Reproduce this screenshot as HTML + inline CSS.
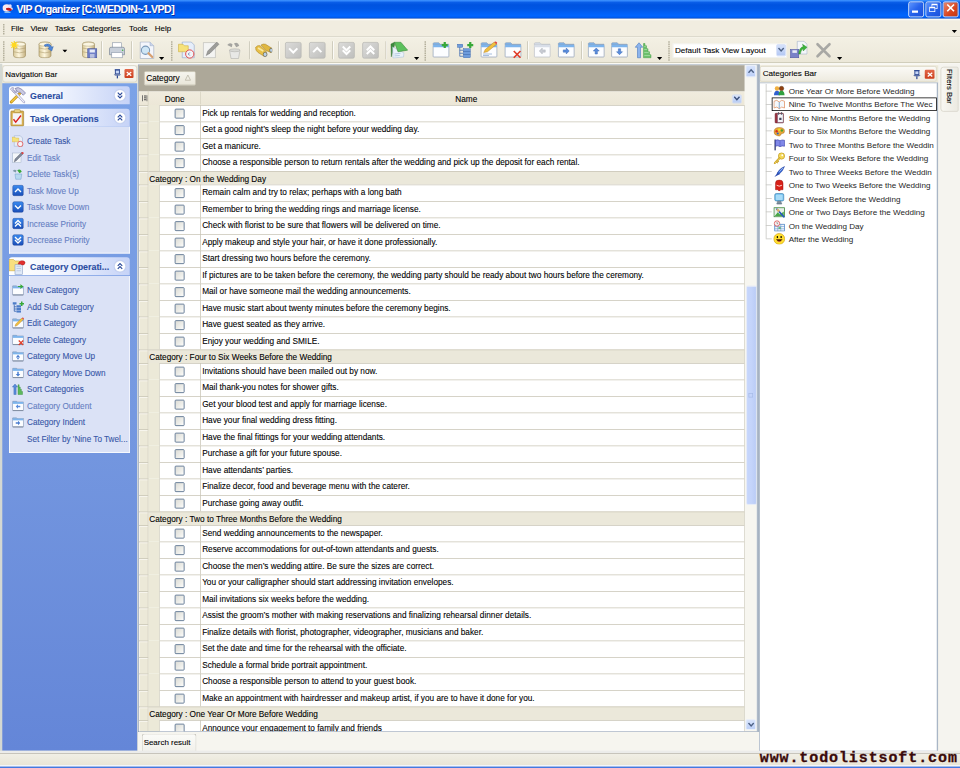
<!DOCTYPE html><html><head><meta charset='utf-8'><style>
html,body{margin:0;padding:0;width:960px;height:768px;overflow:hidden;background:#ECE9D8}
#root{position:absolute;left:0;top:0;width:1280px;height:1024px;transform:scale(0.75);transform-origin:0 0;overflow:hidden;background:#ECE9D8;font-family:"Liberation Sans",sans-serif;font-size:11px;color:#000}
#root div{position:absolute;box-sizing:border-box}
#root .t{white-space:nowrap;line-height:14px;-webkit-text-stroke:0.12px currentColor}
</style></head><body><div id='root'><div style="left:0px;top:0px;width:1280px;height:26px;background:linear-gradient(#4096FF 0%,#2A7EF8 6%,#0A5EE8 12%,#0053E0 25%,#0056E4 45%,#0060F6 65%,#0066FF 82%,#005AEA 90%,#0042BE 96%,#1A50C8 100%)"></div><svg style="position:absolute;left:2px;top:3px" width="17" height="16" viewBox="0 0 17 16"><ellipse cx="7" cy="7.5" rx="5.5" ry="5" fill="#F8E8F0"/><circle cx="11.5" cy="5" r="2.2" fill="#E8E0F8"/><circle cx="13" cy="8.5" r="2" fill="#F0E8F0"/><path d="M6 8 Q10 6.5 13.5 9 Q14.5 11 12 11.5 Q8 11 6 9.5Z" fill="#C0141C"/><path d="M4 13.5 L12 13.5" stroke="#88C0F0" stroke-width="1.5"/></svg><div class="t" style="left:22px;top:3.3px;font-weight:bold;font-size:14px;letter-spacing:-0.6px;line-height:18px;color:#fff;text-shadow:1px 1px 0 #0A2A9C">VIP Organizer [C:\WEDDIN~1.VPD]</div><div style="left:1211px;top:2px;width:21px;height:21px;border:1px solid #fff;border-radius:3px;background:linear-gradient(135deg,#5F97FF,#2663EC 50%,#1C50D9);box-shadow:inset 0 0 1px #1D3CB0"></div><div style="left:1216px;top:14px;width:8px;height:3px;background:#fff"></div><div style="left:1234px;top:2px;width:21px;height:21px;border:1px solid #fff;border-radius:3px;background:linear-gradient(135deg,#5F97FF,#2663EC 50%,#1C50D9);box-shadow:inset 0 0 1px #1D3CB0"></div><div style="left:1242px;top:5px;width:8px;height:7px;border:1px solid #fff;border-top-width:2px"></div><div style="left:1239px;top:9px;width:8px;height:7px;border:1px solid #fff;border-top-width:2px;background:#2B66EA"></div><div style="left:1257px;top:2px;width:21px;height:21px;border:1px solid #fff;border-radius:3px;background:linear-gradient(135deg,#E98B6F,#D9451E 60%,#C23A12);box-shadow:inset 0 0 1px #1D3CB0"></div><svg style="position:absolute;left:1261px;top:4px" width="13" height="13" viewBox="0 0 13 13"><path d="M2 2 L11 11 M11 2 L2 11" stroke="#fff" stroke-width="2.2"/></svg><div style="left:0px;top:25px;width:1280px;height:24px;background:#F1EDE0;border-top:2px solid #FBFBF6;border-bottom:1px solid #CAC6B6"></div><div style="left:4px;top:32px;width:2px;height:2px;background:#B4B09C"></div><div style="left:4px;top:35px;width:2px;height:2px;background:#B4B09C"></div><div style="left:4px;top:38px;width:2px;height:2px;background:#B4B09C"></div><div style="left:4px;top:41px;width:2px;height:2px;background:#B4B09C"></div><div style="left:4px;top:44px;width:2px;height:2px;background:#B4B09C"></div><div class="t" style="left:14.5px;top:29.5px;font-size:10.6px">File</div><div class="t" style="left:40.5px;top:29.5px;font-size:10.6px">View</div><div class="t" style="left:73px;top:29.5px;font-size:10.6px">Tasks</div><div class="t" style="left:109.6px;top:29.5px;font-size:10.6px">Categories</div><div class="t" style="left:172px;top:29.5px;font-size:10.6px">Tools</div><div class="t" style="left:206.4px;top:29.5px;font-size:10.6px">Help</div><svg style="position:absolute;left:1269px;top:40px" width="7" height="4" viewBox="0 0 7 4"><path d="M0 0 L7 0 L3.5 4Z" fill="#000"/></svg><div style="left:0px;top:49px;width:1280px;height:35px;background:linear-gradient(#F3F0E4,#ECE8D9);border-top:1px solid #FBFAF4;border-bottom:1px solid #C9C5B3"></div><div style="left:0px;top:84px;width:1280px;height:2.5px;background:#F9F8F3"></div><div style="left:4px;top:55px;width:2px;height:2px;background:#B4B09C"></div><div style="left:4px;top:58px;width:2px;height:2px;background:#B4B09C"></div><div style="left:4px;top:61px;width:2px;height:2px;background:#B4B09C"></div><div style="left:4px;top:64px;width:2px;height:2px;background:#B4B09C"></div><div style="left:4px;top:67px;width:2px;height:2px;background:#B4B09C"></div><div style="left:4px;top:70px;width:2px;height:2px;background:#B4B09C"></div><div style="left:4px;top:73px;width:2px;height:2px;background:#B4B09C"></div><div style="left:4px;top:76px;width:2px;height:2px;background:#B4B09C"></div><div style="left:4px;top:79px;width:2px;height:2px;background:#B4B09C"></div><svg style="position:absolute;left:13.5px;top:54px" width="24" height="24" viewBox="0 0 24 24"><defs><linearGradient id="dbg" x1="0" x2="1"><stop offset="0" stop-color="#D8C898"/><stop offset=".45" stop-color="#FFF8E0"/><stop offset="1" stop-color="#C4B080"/></linearGradient></defs><path d="M4 5 Q4 2 12 2 Q20 2 20 5 L20 20 Q20 23 12 23 Q4 23 4 20Z" fill="url(#dbg)" stroke="#9C8A5A" stroke-width=".8"/><ellipse cx="12" cy="5" rx="8" ry="2.6" fill="#FBF6E2" stroke="#A8976A" stroke-width=".6"/><path d="M4 10 Q12 13 20 10 M4 15 Q12 18 20 15" fill="none" stroke="#A8976A" stroke-width=".7"/><circle cx="5" cy="6" r="3" fill="#FFE030"/><path d="M5 0.5 L5 11.5 M-0.5 6 L10.5 6 M1.2 2.2 L8.8 9.8 M8.8 2.2 L1.2 9.8" stroke="#FFD820" stroke-width="1.6"/></svg><svg style="position:absolute;left:48px;top:54px" width="24" height="24" viewBox="0 0 24 24"><defs><linearGradient id="dbg" x1="0" x2="1"><stop offset="0" stop-color="#D8C898"/><stop offset=".45" stop-color="#FFF8E0"/><stop offset="1" stop-color="#C4B080"/></linearGradient></defs><path d="M4 5 Q4 2 12 2 Q20 2 20 5 L20 20 Q20 23 12 23 Q4 23 4 20Z" fill="url(#dbg)" stroke="#9C8A5A" stroke-width=".8"/><ellipse cx="12" cy="5" rx="8" ry="2.6" fill="#FBF6E2" stroke="#A8976A" stroke-width=".6"/><path d="M4 10 Q12 13 20 10 M4 15 Q12 18 20 15" fill="none" stroke="#A8976A" stroke-width=".7"/><path d="M11 6 Q18 2 21 9 L23 8 L21 14 L16 11 L18 10 Q16 6 12 8Z" fill="#4E86D8" stroke="#2A5BA8" stroke-width=".6"/></svg><svg style="position:absolute;left:83px;top:66px" width="7" height="4" viewBox="0 0 7 4"><path d="M0 0 L7 0 L3.5 4Z" fill="#000"/></svg><svg style="position:absolute;left:106px;top:54px" width="24" height="24" viewBox="0 0 24 24"><defs><linearGradient id="dbg" x1="0" x2="1"><stop offset="0" stop-color="#D8C898"/><stop offset=".45" stop-color="#FFF8E0"/><stop offset="1" stop-color="#C4B080"/></linearGradient></defs><path d="M4 5 Q4 2 12 2 Q20 2 20 5 L20 20 Q20 23 12 23 Q4 23 4 20Z" fill="url(#dbg)" stroke="#9C8A5A" stroke-width=".8"/><ellipse cx="12" cy="5" rx="8" ry="2.6" fill="#FBF6E2" stroke="#A8976A" stroke-width=".6"/><path d="M4 10 Q12 13 20 10 M4 15 Q12 18 20 15" fill="none" stroke="#A8976A" stroke-width=".7"/><rect x="11" y="11" width="12" height="12" fill="#6F7FC8" stroke="#45549A" stroke-width=".8"/><rect x="13.5" y="12" width="7" height="4" fill="#E8ECF8"/><rect x="14" y="18" width="6" height="5" fill="#B8C0E0"/></svg><div style="left:135px;top:55px;width:1px;height:24px;background:#C5C2B2;box-shadow:1px 0 0 #fff"></div><svg style="position:absolute;left:144px;top:55px" width="24" height="24" viewBox="0 0 24 24"><rect x="6" y="2" width="12" height="8" fill="#fff" stroke="#8A96A8" stroke-width=".8"/><path d="M2 10 Q2 8 4 8 L20 8 Q22 8 22 10 L22 18 L2 18Z" fill="#C9D0DA" stroke="#6E7A8C" stroke-width=".8"/><rect x="5" y="15" width="14" height="7" fill="#fff" stroke="#8A96A8" stroke-width=".8"/><circle cx="19.5" cy="12" r="1" fill="#3CB43C"/></svg><div style="left:175px;top:55px;width:1px;height:24px;background:#C5C2B2;box-shadow:1px 0 0 #fff"></div><svg style="position:absolute;left:184px;top:55px" width="24" height="24" viewBox="0 0 24 24"><path d="M3 1 L16 1 L21 6 L21 23 L3 23Z" fill="#F4F6FC" stroke="#9AA8C0" stroke-width=".8"/><path d="M16 1 L16 6 L21 6" fill="#C8D4EC" stroke="#9AA8C0" stroke-width=".6"/><circle cx="10" cy="12" r="5.5" fill="#CFE6F6" stroke="#7A98B8" stroke-width="1.4"/><path d="M14 16 L19 21" stroke="#D8A070" stroke-width="3" stroke-linecap="round"/></svg><svg style="position:absolute;left:212px;top:76px" width="7" height="4" viewBox="0 0 7 4"><path d="M0 0 L7 0 L3.5 4Z" fill="#000"/></svg><div style="left:228px;top:55px;width:2px;height:2px;background:#B4B09C"></div><div style="left:228px;top:58px;width:2px;height:2px;background:#B4B09C"></div><div style="left:228px;top:61px;width:2px;height:2px;background:#B4B09C"></div><div style="left:228px;top:64px;width:2px;height:2px;background:#B4B09C"></div><div style="left:228px;top:67px;width:2px;height:2px;background:#B4B09C"></div><div style="left:228px;top:70px;width:2px;height:2px;background:#B4B09C"></div><div style="left:228px;top:73px;width:2px;height:2px;background:#B4B09C"></div><div style="left:228px;top:76px;width:2px;height:2px;background:#B4B09C"></div><div style="left:228px;top:79px;width:2px;height:2px;background:#B4B09C"></div><svg style="position:absolute;left:237px;top:55px" width="24" height="24" viewBox="0 0 24 24"><path d="M6 1 L18 1 L22 5 L22 22 L6 22Z" fill="#E6EEFA" stroke="#8EA4C8" stroke-width=".8"/><path d="M1 4 L7 4 L9 6 L14 6 L14 14 L1 14Z" fill="#F6E27A" stroke="#C8A838" stroke-width=".7"/><circle cx="16" cy="17" r="5.5" fill="#F2F4F8" stroke="#E04848" stroke-width="1.3"/><path d="M16 15 L14 17 L16 19" fill="none" stroke="#6080B0" stroke-width="1.2"/></svg><svg style="position:absolute;left:269px;top:55px" width="24" height="24" viewBox="0 0 24 24"><rect x="2" y="2" width="16" height="20" fill="#F4F4F2" stroke="#B8B8B4" stroke-width=".8"/><path d="M6 19 L8 13 L20 1 L23 4 L11 16Z" fill="#9C9C98" stroke="#777" stroke-width=".6"/></svg><svg style="position:absolute;left:301px;top:55px" width="24" height="24" viewBox="0 0 24 24"><path d="M5 12 L19 12 L17 23 L7 23Z" fill="#E8E8E6" stroke="#B0B0AC" stroke-width=".8"/><ellipse cx="12" cy="12" rx="7" ry="2" fill="#D8D8D4" stroke="#A8A8A4" stroke-width=".6"/><path d="M2 5 Q5 1 9 4 L8 8Z M11 3 Q16 0 18 6 L14 8Z" fill="#A4A4A0"/></svg><div style="left:332px;top:55px;width:1px;height:24px;background:#C5C2B2;box-shadow:1px 0 0 #fff"></div><svg style="position:absolute;left:339px;top:55px" width="24" height="24" viewBox="0 0 24 24"><path d="M2 8 Q4 5 8 6 L16 14 Q17 19 13 20 L5 15 Q1 12 2 8Z" fill="#E8C048" stroke="#A88020" stroke-width=".7"/><path d="M9 5 Q12 3 15 4 L23 9 Q25 13 22 15 L15 12Z" fill="#E0B840" stroke="#A88020" stroke-width=".7"/><path d="M5 9 L12 13" stroke="#F8E8A0" stroke-width="2"/><ellipse cx="14.5" cy="17.5" rx="2.5" ry="3" fill="#B8D0E8" stroke="#6A6040" stroke-width=".9"/><ellipse cx="22.5" cy="12" rx="2" ry="2.8" fill="#B8D0E8" stroke="#6A6040" stroke-width=".9"/></svg><div style="left:371px;top:55px;width:1px;height:24px;background:#C5C2B2;box-shadow:1px 0 0 #fff"></div><svg style="position:absolute;left:379px;top:55px" width="24" height="24" viewBox="0 0 24 24"><defs><linearGradient id="gbg" x1="0" y1="0" x2="1" y2="1"><stop offset="0" stop-color="#DCDCDA"/><stop offset="1" stop-color="#BEBEBC"/></linearGradient></defs><rect x="1.5" y="1.5" width="21" height="21" rx="2" fill="url(#gbg)" stroke="#B8B8B4" stroke-width="1"/><path d="M6.5 9.5 L12 15 L17.5 9.5" fill="none" stroke="#fff" stroke-width="2.6"/></svg><svg style="position:absolute;left:411px;top:55px" width="24" height="24" viewBox="0 0 24 24"><defs><linearGradient id="gbg" x1="0" y1="0" x2="1" y2="1"><stop offset="0" stop-color="#DCDCDA"/><stop offset="1" stop-color="#BEBEBC"/></linearGradient></defs><rect x="1.5" y="1.5" width="21" height="21" rx="2" fill="url(#gbg)" stroke="#B8B8B4" stroke-width="1"/><path d="M6.5 14.5 L12 9 L17.5 14.5" fill="none" stroke="#fff" stroke-width="2.6"/></svg><div style="left:443px;top:55px;width:1px;height:24px;background:#C5C2B2;box-shadow:1px 0 0 #fff"></div><svg style="position:absolute;left:450px;top:55px" width="24" height="24" viewBox="0 0 24 24"><defs><linearGradient id="gbg" x1="0" y1="0" x2="1" y2="1"><stop offset="0" stop-color="#DCDCDA"/><stop offset="1" stop-color="#BEBEBC"/></linearGradient></defs><rect x="1.5" y="1.5" width="21" height="21" rx="2" fill="url(#gbg)" stroke="#B8B8B4" stroke-width="1"/><path d="M7 7 L12 12 L17 7 M7 12 L12 17 L17 12" fill="none" stroke="#fff" stroke-width="2.6"/></svg><svg style="position:absolute;left:482px;top:55px" width="24" height="24" viewBox="0 0 24 24"><defs><linearGradient id="gbg" x1="0" y1="0" x2="1" y2="1"><stop offset="0" stop-color="#DCDCDA"/><stop offset="1" stop-color="#BEBEBC"/></linearGradient></defs><rect x="1.5" y="1.5" width="21" height="21" rx="2" fill="url(#gbg)" stroke="#B8B8B4" stroke-width="1"/><path d="M7 12 L12 7 L17 12 M7 17 L12 12 L17 17" fill="none" stroke="#fff" stroke-width="2.6"/></svg><div style="left:514px;top:55px;width:1px;height:24px;background:#C5C2B2;box-shadow:1px 0 0 #fff"></div><svg style="position:absolute;left:520px;top:55px" width="24" height="24" viewBox="0 0 24 24"><path d="M1.3 3.7 L6 1.3 L6 5 L1.8 20.7Z" fill="#3C8A3C" stroke="#2E6E2E" stroke-width=".6"/><path d="M3.5 7.5 L18.5 15.5 L18 21 L4 22.3Z" fill="#EAF2FA" stroke="#A8C0D8" stroke-width=".7"/><path d="M6 17 L14 16 M6 19.5 L13 19" stroke="#90B0D0" stroke-width=".8"/><path d="M5.9 1.3 L14.4 1.3 L23.5 11.9 L10.7 14Z" fill="#5CC05C" stroke="#3A8A3A" stroke-width=".8"/></svg><svg style="position:absolute;left:552px;top:76px" width="7" height="4" viewBox="0 0 7 4"><path d="M0 0 L7 0 L3.5 4Z" fill="#000"/></svg><div style="left:566px;top:55px;width:2px;height:2px;background:#B4B09C"></div><div style="left:566px;top:58px;width:2px;height:2px;background:#B4B09C"></div><div style="left:566px;top:61px;width:2px;height:2px;background:#B4B09C"></div><div style="left:566px;top:64px;width:2px;height:2px;background:#B4B09C"></div><div style="left:566px;top:67px;width:2px;height:2px;background:#B4B09C"></div><div style="left:566px;top:70px;width:2px;height:2px;background:#B4B09C"></div><div style="left:566px;top:73px;width:2px;height:2px;background:#B4B09C"></div><div style="left:566px;top:76px;width:2px;height:2px;background:#B4B09C"></div><div style="left:566px;top:79px;width:2px;height:2px;background:#B4B09C"></div><svg style="position:absolute;left:576px;top:55px" width="24" height="24" viewBox="0 0 24 24"><path d="M1.5 5 L1.5 3 Q1.5 2 3 2 L9 2 L11 4 L22 4 Q22.5 4 22.5 5" fill="#7DB4EC" stroke="#8C9CB4" stroke-width=".8"/><rect x="1.5" y="5" width="21" height="16" rx="1" fill="#FCFDFF" stroke="#8C9CB4" stroke-width=".9"/><rect x="1.5" y="5" width="21" height="3" fill="#7DB4EC"/><path d="M17 1 L17 9 M13 5 L21 5" stroke="#38A838" stroke-width="3"/></svg><svg style="position:absolute;left:608px;top:55px" width="24" height="24" viewBox="0 0 24 24"><rect x="2" y="4" width="7" height="4" fill="#6E9CDC" stroke="#3A68B0" stroke-width=".6"/><path d="M5 8 L5 20 L10 20 M5 12 L10 12 M5 16 L10 16" stroke="#3A68B0" fill="none"/><rect x="10" y="10" width="9" height="4" fill="#6E9CDC" stroke="#3A68B0" stroke-width=".6"/><rect x="10" y="14" width="9" height="4" fill="#6E9CDC" stroke="#3A68B0" stroke-width=".6"/><rect x="10" y="18" width="9" height="4" fill="#6E9CDC" stroke="#3A68B0" stroke-width=".6"/><path d="M19 1 L19 9 M15 5 L23 5" stroke="#38A838" stroke-width="3"/></svg><svg style="position:absolute;left:640px;top:55px" width="24" height="24" viewBox="0 0 24 24"><path d="M1.5 5 L1.5 3 Q1.5 2 3 2 L9 2 L11 4 L22 4 Q22.5 4 22.5 5" fill="#7DB4EC" stroke="#8C9CB4" stroke-width=".8"/><rect x="1.5" y="5" width="21" height="16" rx="1" fill="#FCFDFF" stroke="#8C9CB4" stroke-width=".9"/><rect x="1.5" y="5" width="21" height="3" fill="#7DB4EC"/><path d="M5 15 L7 11 L19 1 L22 4 L10 14Z" fill="#F0C040" stroke="#B07820" stroke-width=".6"/><path d="M19 1 L22 4 L23 2 L21 0Z" fill="#E04040"/><path d="M4 17 L16 17 M4 19 L12 19" stroke="#8CA8D0"/></svg><svg style="position:absolute;left:672px;top:55px" width="24" height="24" viewBox="0 0 24 24"><path d="M1.5 5 L1.5 3 Q1.5 2 3 2 L9 2 L11 4 L22 4 Q22.5 4 22.5 5" fill="#7DB4EC" stroke="#8C9CB4" stroke-width=".8"/><rect x="1.5" y="5" width="21" height="16" rx="1" fill="#FCFDFF" stroke="#8C9CB4" stroke-width=".9"/><rect x="1.5" y="5" width="21" height="3" fill="#7DB4EC"/><path d="M13 13 L22 22 M22 13 L13 22" stroke="#E03C28" stroke-width="2.2"/></svg><div style="left:703px;top:55px;width:1px;height:24px;background:#C5C2B2;box-shadow:1px 0 0 #fff"></div><svg style="position:absolute;left:711px;top:55px" width="24" height="24" viewBox="0 0 24 24"><path d="M1.5 5 L1.5 3 Q1.5 2 3 2 L9 2 L11 4 L22 4 Q22.5 4 22.5 5" fill="#D8DEE8" stroke="#B8BCC4" stroke-width=".8"/><rect x="1.5" y="5" width="21" height="16" rx="1" fill="#FCFDFF" stroke="#B8BCC4" stroke-width=".9"/><rect x="1.5" y="5" width="21" height="3" fill="#D8DEE8"/><path d="M8 13 L12 9 L12 11.5 L16 11.5 L16 14.5 L12 14.5 L12 17Z" fill="#C8CCD4" stroke="#A8ACB4" stroke-width=".6"/></svg><svg style="position:absolute;left:743px;top:55px" width="24" height="24" viewBox="0 0 24 24"><path d="M1.5 5 L1.5 3 Q1.5 2 3 2 L9 2 L11 4 L22 4 Q22.5 4 22.5 5" fill="#7DB4EC" stroke="#8C9CB4" stroke-width=".8"/><rect x="1.5" y="5" width="21" height="16" rx="1" fill="#FCFDFF" stroke="#8C9CB4" stroke-width=".9"/><rect x="1.5" y="5" width="21" height="3" fill="#7DB4EC"/><path d="M16 13 L12 9 L12 11.5 L8 11.5 L8 14.5 L12 14.5 L12 17Z" fill="#5A8CDC" stroke="#3060B0" stroke-width=".6"/></svg><div style="left:775px;top:55px;width:1px;height:24px;background:#C5C2B2;box-shadow:1px 0 0 #fff"></div><svg style="position:absolute;left:783px;top:55px" width="24" height="24" viewBox="0 0 24 24"><path d="M1.5 5 L1.5 3 Q1.5 2 3 2 L9 2 L11 4 L22 4 Q22.5 4 22.5 5" fill="#7DB4EC" stroke="#8C9CB4" stroke-width=".8"/><rect x="1.5" y="5" width="21" height="16" rx="1" fill="#FCFDFF" stroke="#8C9CB4" stroke-width=".9"/><rect x="1.5" y="5" width="21" height="3" fill="#7DB4EC"/><path d="M12 9 L8 13 L10.5 13 L10.5 17 L13.5 17 L13.5 13 L16 13Z" fill="#5A8CDC" stroke="#3060B0" stroke-width=".6"/></svg><svg style="position:absolute;left:814px;top:55px" width="24" height="24" viewBox="0 0 24 24"><path d="M1.5 5 L1.5 3 Q1.5 2 3 2 L9 2 L11 4 L22 4 Q22.5 4 22.5 5" fill="#7DB4EC" stroke="#8C9CB4" stroke-width=".8"/><rect x="1.5" y="5" width="21" height="16" rx="1" fill="#FCFDFF" stroke="#8C9CB4" stroke-width=".9"/><rect x="1.5" y="5" width="21" height="3" fill="#7DB4EC"/><path d="M12 18 L8 14 L10.5 14 L10.5 10 L13.5 10 L13.5 14 L16 14Z" fill="#5A8CDC" stroke="#3060B0" stroke-width=".6"/></svg><svg style="position:absolute;left:846px;top:55px" width="24" height="24" viewBox="0 0 24 24"><path d="M6 2 L1 8 L4 8 L4 22 L8 22 L8 8 L11 8Z" fill="#8CB4EC" stroke="#4A78C0" stroke-width=".8"/><path d="M12 3 L14 3 L14 6 L16 6 L16 10 L18 10 L18 14 L20 14 L20 18 L22 18 L22 22 L12 22Z" fill="#6CC06C" stroke="#3A9A3A" stroke-width=".6"/><path d="M13 7 L15 7 M13 11 L17 11 M13 15 L19 15 M13 19 L21 19" stroke="#B8E8B8" stroke-width=".8"/></svg><svg style="position:absolute;left:876px;top:76px" width="7" height="4" viewBox="0 0 7 4"><path d="M0 0 L7 0 L3.5 4Z" fill="#000"/></svg><div style="left:891px;top:55px;width:2px;height:2px;background:#B4B09C"></div><div style="left:891px;top:58px;width:2px;height:2px;background:#B4B09C"></div><div style="left:891px;top:61px;width:2px;height:2px;background:#B4B09C"></div><div style="left:891px;top:64px;width:2px;height:2px;background:#B4B09C"></div><div style="left:891px;top:67px;width:2px;height:2px;background:#B4B09C"></div><div style="left:891px;top:70px;width:2px;height:2px;background:#B4B09C"></div><div style="left:891px;top:73px;width:2px;height:2px;background:#B4B09C"></div><div style="left:891px;top:76px;width:2px;height:2px;background:#B4B09C"></div><div style="left:891px;top:79px;width:2px;height:2px;background:#B4B09C"></div><div style="left:897px;top:58px;width:152px;height:19px;background:#fff;border:1px solid #F0EFEA"></div><div class="t" style="left:900px;top:60px;font-size:10.8px">Default Task View Layout</div><div style="left:1035px;top:59px;width:13px;height:16px;background:linear-gradient(#D6E2FB,#B4C8F4);border-radius:2px;border:1px solid #C8D6F6"></div><svg style="position:absolute;left:1037px;top:63px" width="9" height="7" viewBox="0 0 9 7"><path d="M1 1 L4.5 5 L8 1" fill="none" stroke="#4D6185" stroke-width="1.8"/></svg><svg style="position:absolute;left:1053px;top:54px" width="24" height="24" viewBox="0 0 24 24"><path d="M10 1 L19 1 L23 5 L23 18 L10 18Z" fill="#F4F6FA" stroke="#98A8C0" stroke-width=".7"/><rect x="1" y="12" width="11" height="11" fill="#7A82C8" stroke="#4A52A0" stroke-width=".7"/><rect x="3.5" y="13" width="6" height="3.5" fill="#E8ECF8"/><path d="M12 18 Q12 10 18 8 L17 5 L23 9 L18 14 L18 11 Q15 12 14 18Z" fill="#3CB43C" stroke="#2A8A2A" stroke-width=".6"/></svg><svg style="position:absolute;left:1086px;top:55px" width="24" height="24" viewBox="0 0 24 24"><path d="M4 4 L20 20 M20 4 L4 20" stroke="#A8A8A4" stroke-width="3.5" stroke-linecap="round"/></svg><svg style="position:absolute;left:1116px;top:76px" width="7" height="4" viewBox="0 0 7 4"><path d="M0 0 L7 0 L3.5 4Z" fill="#000"/></svg><div style="left:3px;top:86.5px;width:180px;height:23px;background:linear-gradient(#FAF9F5,#F0EEE6);border:1px solid #D6D3C6;border-radius:4px"></div><div class="t" style="left:7px;top:90.5px;font-size:10.6px">Navigation Bar</div><svg style="position:absolute;left:151px;top:92px" width="11" height="13" viewBox="0 0 11 13"><path d="M2 1 L9 1" stroke="#2A4690" stroke-width="1.6"/><rect x="2.8" y="1.5" width="5.4" height="5" fill="#C8D8F8" stroke="#2A4690" stroke-width="1.2"/><path d="M0.5 7.2 L10.5 7.2 L8.5 8.8 L2.5 8.8Z" fill="#2A4690"/><path d="M5.5 8.5 L5.5 12.5" stroke="#2A4690" stroke-width="1.6"/></svg><div style="left:165.7px;top:92px;width:12.5px;height:12px;background:linear-gradient(#E2684A,#CC3E1C);border-radius:1.5px"></div><svg style="position:absolute;left:168.2px;top:94.5px" width="8" height="7" viewBox="0 0 8 7"><path d="M1 1 L7 6 M7 1 L1 6" stroke="#fff" stroke-width="1.7"/></svg><div style="left:0px;top:85px;width:2.5px;height:918px;background:#D4D8D2"></div><div style="left:3px;top:111px;width:180px;height:890px;background:linear-gradient(#7BA2E7,#7598E0 50%,#6486D8 100%)"></div><div style="left:12px;top:115px;width:161px;height:24px;background:linear-gradient(90deg,#fff 0%,#F4F7FE 35%,#C6D3F7 100%);border-radius:4px 4px 0 0"></div><svg style="position:absolute;left:12px;top:115px" width="24" height="24" viewBox="0 0 24 24"><path d="M3 21 L14 10" stroke="#C89820" stroke-width="4" stroke-linecap="round"/><path d="M3 21 L14 10" stroke="#F0C840" stroke-width="2"/><path d="M8 3 Q12 0 17 4 L22 9 L19 12 L15 8 L12 8Z" fill="#C8C8E0" stroke="#6A6A9A" stroke-width=".8"/><path d="M6 6 L20 21" stroke="#9898C0" stroke-width="3.2" stroke-linecap="round"/><path d="M6 6 L20 21" stroke="#F0F0FA" stroke-width="1.6" stroke-linecap="round"/><path d="M2 4 Q3 1 6 2 L5 5 L7 7 L10 6 Q10 9 7 9Z" fill="#E8E8F8" stroke="#6A6A9A" stroke-width=".7"/></svg><div class="t" style="left:40px;top:121px;font-weight:bold;font-size:11.8px;color:#2A4DA2;line-height:14px">General</div><div style="left:152px;top:119px;width:16px;height:16px;background:#fff;border-radius:50%;border:1px solid #C8D4F0;box-shadow:0 0 1px #A8B8E0"></div><svg style="position:absolute;left:152px;top:119px" width="16" height="16" viewBox="0 0 16 16"><path d="M5 4.5 L8 7.5 L11 4.5 M5 8.5 L8 11.5 L11 8.5" fill="none" stroke="#28489A" stroke-width="1.5"/></svg><div style="left:12px;top:145px;width:161px;height:24px;background:linear-gradient(90deg,#fff 0%,#F4F7FE 35%,#C6D3F7 100%);border-radius:4px 4px 0 0"></div><svg style="position:absolute;left:12px;top:145px" width="24" height="24" viewBox="0 0 24 24"><rect x="2.5" y="3" width="17" height="20" rx="1" fill="#D8B050" stroke="#9A7A30" stroke-width=".8"/><rect x="5" y="6" width="12" height="15" fill="#F4F4F8"/><rect x="7" y="1" width="8" height="4" rx="1" fill="#E8D080" stroke="#9A7A30" stroke-width=".6"/><path d="M6 14 L9 18 L16 9" fill="none" stroke="#D82020" stroke-width="1.8"/></svg><div class="t" style="left:40px;top:151px;font-weight:bold;font-size:11.8px;color:#2A4DA2;line-height:14px">Task Operations</div><div style="left:152px;top:149px;width:16px;height:16px;background:#fff;border-radius:50%;border:1px solid #C8D4F0;box-shadow:0 0 1px #A8B8E0"></div><svg style="position:absolute;left:152px;top:149px" width="16" height="16" viewBox="0 0 16 16"><path d="M5 7.5 L8 4.5 L11 7.5 M5 11.5 L8 8.5 L11 11.5" fill="none" stroke="#28489A" stroke-width="1.5"/></svg><div style="left:12px;top:169px;width:161px;height:169px;background:#DBE2F6;border:1px solid #fff;border-top:none"></div><svg style="position:absolute;left:16px;top:180px" width="16" height="16" viewBox="0 0 16 16"><path d="M3 1 L11 1 L14 4 L14 15 L3 15Z" fill="#E8EEF8" stroke="#8EA4C8" stroke-width=".6"/><path d="M0 3 L4 3 L5 4 L9 4 L9 9 L0 9Z" fill="#F6E27A" stroke="#C8A838" stroke-width=".5"/><circle cx="11" cy="12" r="3.6" fill="#F4F4F8" stroke="#E04848" stroke-width="1"/></svg><div class="t" style="left:36px;top:181px;font-size:10.9px;color:#3756A6">Create Task</div><svg style="position:absolute;left:16px;top:202px" width="16" height="16" viewBox="0 0 16 16"><rect x="1" y="2" width="11" height="13" fill="#F4F6FA" stroke="#98A8C0" stroke-width=".6"/><path d="M3 14 L4 10 L13 1 L15 3 L6 12Z" fill="#808898" stroke="#505868" stroke-width=".5"/><circle cx="14" cy="2" r="1.5" fill="#E04040"/></svg><div class="t" style="left:36px;top:203px;font-size:10.9px;color:#6580C2">Edit Task</div><svg style="position:absolute;left:16px;top:224px" width="16" height="16" viewBox="0 0 16 16"><path d="M4 8 L13 8 L12 15 L5 15Z" fill="#B8D8F0" stroke="#6898C8" stroke-width=".6"/><path d="M1 4 Q3 1 6 3 L5 6Z" fill="#8098A8"/><path d="M7 3 Q11 0 13 5 L10 7Z" fill="#38A838"/></svg><div class="t" style="left:36px;top:225px;font-size:10.9px;color:#6580C2">Delete Task(s)</div><svg style="position:absolute;left:16px;top:246px" width="16" height="16" viewBox="0 0 16 16"><defs><linearGradient id="bsq" x1="0" y1="0" x2="0" y2="1"><stop offset="0" stop-color="#3A8AF0"/><stop offset="1" stop-color="#1A4EB8"/></linearGradient></defs><rect x="1" y="1" width="14" height="14" rx="2" fill="url(#bsq)" stroke="#1A3E90" stroke-width=".6"/><path d="M4 10 L8 6 L12 10" fill="none" stroke="#fff" stroke-width="1.8"/></svg><div class="t" style="left:36px;top:247px;font-size:10.9px;color:#6580C2">Task Move Up</div><svg style="position:absolute;left:16px;top:268px" width="16" height="16" viewBox="0 0 16 16"><defs><linearGradient id="bsq" x1="0" y1="0" x2="0" y2="1"><stop offset="0" stop-color="#3A8AF0"/><stop offset="1" stop-color="#1A4EB8"/></linearGradient></defs><rect x="1" y="1" width="14" height="14" rx="2" fill="url(#bsq)" stroke="#1A3E90" stroke-width=".6"/><path d="M4 6 L8 10 L12 6" fill="none" stroke="#fff" stroke-width="1.8"/></svg><div class="t" style="left:36px;top:269px;font-size:10.9px;color:#6580C2">Task Move Down</div><svg style="position:absolute;left:16px;top:290px" width="16" height="16" viewBox="0 0 16 16"><defs><linearGradient id="bsq" x1="0" y1="0" x2="0" y2="1"><stop offset="0" stop-color="#3A8AF0"/><stop offset="1" stop-color="#1A4EB8"/></linearGradient></defs><rect x="1" y="1" width="14" height="14" rx="2" fill="url(#bsq)" stroke="#1A3E90" stroke-width=".6"/><path d="M4 8 L8 4 L12 8 M4 12 L8 8 L12 12" fill="none" stroke="#fff" stroke-width="1.8"/></svg><div class="t" style="left:36px;top:291px;font-size:10.9px;color:#6580C2">Increase Priority</div><svg style="position:absolute;left:16px;top:312px" width="16" height="16" viewBox="0 0 16 16"><defs><linearGradient id="bsq" x1="0" y1="0" x2="0" y2="1"><stop offset="0" stop-color="#3A8AF0"/><stop offset="1" stop-color="#1A4EB8"/></linearGradient></defs><rect x="1" y="1" width="14" height="14" rx="2" fill="url(#bsq)" stroke="#1A3E90" stroke-width=".6"/><path d="M4 4 L8 8 L12 4 M4 8 L8 12 L12 8" fill="none" stroke="#fff" stroke-width="1.8"/></svg><div class="t" style="left:36px;top:313px;font-size:10.9px;color:#6580C2">Decrease Priority</div><div style="left:12px;top:343px;width:161px;height:24px;background:linear-gradient(90deg,#fff 0%,#F4F7FE 35%,#C6D3F7 100%);border-radius:4px 4px 0 0"></div><svg style="position:absolute;left:12px;top:343px" width="24" height="24" viewBox="0 0 24 24"><path d="M0 3 L6 3 L8 5 L14 5 L14 18 L0 18Z" fill="#F8E080" stroke="#C8A030" stroke-width=".7"/><rect x="8" y="10" width="10" height="13" fill="#E0EAF8" stroke="#8098C0" stroke-width=".7"/><path d="M10 12 L16 12 M10 15 L16 15 M10 18 L16 18" stroke="#A0B0D0" stroke-width=".7"/><path d="M12 9 Q14 3 20 5 Q23 7 20 10 Q17 11 15 9Z" fill="#E03030" stroke="#A01818" stroke-width=".5"/></svg><div class="t" style="left:40px;top:349px;font-weight:bold;font-size:11.8px;color:#2A4DA2;line-height:14px">Category Operati...</div><div style="left:152px;top:347px;width:16px;height:16px;background:#fff;border-radius:50%;border:1px solid #C8D4F0;box-shadow:0 0 1px #A8B8E0"></div><svg style="position:absolute;left:152px;top:347px" width="16" height="16" viewBox="0 0 16 16"><path d="M5 7.5 L8 4.5 L11 7.5 M5 11.5 L8 8.5 L11 11.5" fill="none" stroke="#28489A" stroke-width="1.5"/></svg><div style="left:12px;top:368px;width:161px;height:236px;background:#DBE2F6;border:1px solid #fff;border-top:none"></div><svg style="position:absolute;left:16px;top:379.3px" width="16" height="16" viewBox="0 0 16 16"><rect x="1" y="3" width="14" height="11" fill="#FCFDFF" stroke="#7C8CA8" stroke-width=".7"/><rect x="1" y="3" width="14" height="2.5" fill="#7DB4EC"/><path d="M1 3 L1 2 L6 2 L7 3" fill="#7DB4EC" stroke="#7C8CA8" stroke-width=".5"/><path d="M1 14.5 L15 14.5" stroke="#707C90" stroke-width="1"/><path d="M8 3 L13 3 M11 0.5 L14 3 L11 5.5" stroke="#38A838" stroke-width="1.6" fill="none"/></svg><div class="t" style="left:36px;top:380.3px;font-size:10.9px;color:#3756A6">New Category</div><svg style="position:absolute;left:16px;top:401.3px" width="16" height="16" viewBox="0 0 16 16"><rect x="1" y="2" width="5" height="3" fill="#4C7CC8"/><path d="M3 5 L3 14 L6 14 M3 8 L6 8 M3 11 L6 11" stroke="#2A5AA8" fill="none"/><rect x="6" y="6" width="6" height="3" fill="#4C7CC8"/><rect x="6" y="9.5" width="6" height="3" fill="#4C7CC8"/><rect x="6" y="13" width="6" height="3" fill="#4C7CC8"/><path d="M13 1 L13 7 M10 4 L16 4" stroke="#38A838" stroke-width="2"/></svg><div class="t" style="left:36px;top:402.3px;font-size:10.9px;color:#3756A6">Add Sub Category</div><svg style="position:absolute;left:16px;top:423.3px" width="16" height="16" viewBox="0 0 16 16"><rect x="1" y="3" width="14" height="11" fill="#FCFDFF" stroke="#7C8CA8" stroke-width=".7"/><rect x="1" y="3" width="14" height="2.5" fill="#7DB4EC"/><path d="M1 3 L1 2 L6 2 L7 3" fill="#7DB4EC" stroke="#7C8CA8" stroke-width=".5"/><path d="M1 14.5 L15 14.5" stroke="#707C90" stroke-width="1"/><path d="M4 12 L5 9 L13 1 L15 3 L7 11Z" fill="#F0C040" stroke="#B07820" stroke-width=".5"/><path d="M13 1 L15 3 L16 1.5 L14.5 0Z" fill="#E04040"/></svg><div class="t" style="left:36px;top:424.3px;font-size:10.9px;color:#3756A6">Edit Category</div><svg style="position:absolute;left:16px;top:445.3px" width="16" height="16" viewBox="0 0 16 16"><rect x="1" y="3" width="14" height="11" fill="#FCFDFF" stroke="#7C8CA8" stroke-width=".7"/><rect x="1" y="3" width="14" height="2.5" fill="#7DB4EC"/><path d="M1 3 L1 2 L6 2 L7 3" fill="#7DB4EC" stroke="#7C8CA8" stroke-width=".5"/><path d="M1 14.5 L15 14.5" stroke="#707C90" stroke-width="1"/><path d="M9 9 L15 15 M15 9 L9 15" stroke="#E03C28" stroke-width="1.6"/></svg><div class="t" style="left:36px;top:446.3px;font-size:10.9px;color:#3756A6">Delete Category</div><svg style="position:absolute;left:16px;top:467.3px" width="16" height="16" viewBox="0 0 16 16"><rect x="1" y="3" width="14" height="11" fill="#FCFDFF" stroke="#7C8CA8" stroke-width=".7"/><rect x="1" y="3" width="14" height="2.5" fill="#7DB4EC"/><path d="M1 3 L1 2 L6 2 L7 3" fill="#7DB4EC" stroke="#7C8CA8" stroke-width=".5"/><path d="M1 14.5 L15 14.5" stroke="#707C90" stroke-width="1"/><path d="M8 6 L5 9.5 L11 9.5Z M7 9 L9 9 L9 12 L7 12Z" fill="#4A7CD0"/></svg><div class="t" style="left:36px;top:468.3px;font-size:10.9px;color:#3756A6">Category Move Up</div><svg style="position:absolute;left:16px;top:489.3px" width="16" height="16" viewBox="0 0 16 16"><rect x="1" y="3" width="14" height="11" fill="#FCFDFF" stroke="#7C8CA8" stroke-width=".7"/><rect x="1" y="3" width="14" height="2.5" fill="#7DB4EC"/><path d="M1 3 L1 2 L6 2 L7 3" fill="#7DB4EC" stroke="#7C8CA8" stroke-width=".5"/><path d="M1 14.5 L15 14.5" stroke="#707C90" stroke-width="1"/><path d="M8 13 L5 9.5 L11 9.5Z M7 6.5 L9 6.5 L9 10 L7 10Z" fill="#4A7CD0"/></svg><div class="t" style="left:36px;top:490.3px;font-size:10.9px;color:#3756A6">Category Move Down</div><svg style="position:absolute;left:16px;top:511.29999999999995px" width="16" height="16" viewBox="0 0 16 16"><path d="M4 1 L0.5 5 L2.5 5 L2.5 15 L5.5 15 L5.5 5 L7.5 5Z" fill="#5A8CDC" stroke="#2A5AA8" stroke-width=".5"/><path d="M8 2 L9.5 2 L9.5 5 L11 5 L11 8 L12.5 8 L12.5 11 L14 11 L14 15 L8 15Z" fill="#5CB85C" stroke="#2A8A2A" stroke-width=".5"/></svg><div class="t" style="left:36px;top:512.3px;font-size:10.9px;color:#3756A6">Sort Categories</div><svg style="position:absolute;left:16px;top:533.3px" width="16" height="16" viewBox="0 0 16 16"><rect x="1" y="3" width="14" height="11" fill="#FCFDFF" stroke="#7C8CA8" stroke-width=".7"/><rect x="1" y="3" width="14" height="2.5" fill="#7DB4EC"/><path d="M1 3 L1 2 L6 2 L7 3" fill="#7DB4EC" stroke="#7C8CA8" stroke-width=".5"/><path d="M1 14.5 L15 14.5" stroke="#707C90" stroke-width="1"/><path d="M5 9 L8 6 L8 12Z M8 8 L11 8 L11 10 L8 10Z" fill="#5A8CDC"/></svg><div class="t" style="left:36px;top:534.3px;font-size:10.9px;color:#6580C2">Category Outdent</div><svg style="position:absolute;left:16px;top:555.3px" width="16" height="16" viewBox="0 0 16 16"><rect x="1" y="3" width="14" height="11" fill="#FCFDFF" stroke="#7C8CA8" stroke-width=".7"/><rect x="1" y="3" width="14" height="2.5" fill="#7DB4EC"/><path d="M1 3 L1 2 L6 2 L7 3" fill="#7DB4EC" stroke="#7C8CA8" stroke-width=".5"/><path d="M1 14.5 L15 14.5" stroke="#707C90" stroke-width="1"/><path d="M11 9 L8 6 L8 12Z M5 8 L8 8 L8 10 L5 10Z" fill="#4A7CD0"/></svg><div class="t" style="left:36px;top:556.3px;font-size:10.9px;color:#3756A6">Category Indent</div><div class="t" style="left:36px;top:578.3px;font-size:10.9px;color:#3756A6">Set Filter by &#x27;Nine To Twel...</div><div style="left:184px;top:86px;width:829px;height:890px;background:#fff;border:1px solid #8E9DB2"></div><div style="left:185px;top:87px;width:808px;height:34.5px;background:#ADA899"></div><div style="left:192px;top:95px;width:69px;height:19px;background:linear-gradient(#F6F5EF,#E9E6D9);border:1px solid #D8D4C4;border-radius:2px"></div><div class="t" style="left:195px;top:96.5px;font-size:11px;color:#000">Category</div><svg style="position:absolute;left:246px;top:99px" width="9" height="9" viewBox="0 0 9 9"><path d="M4.5 1 L8 8 L1 8Z" fill="none" stroke="#B8B4A4" stroke-width="1"/></svg><div style="left:185px;top:121.5px;width:808px;height:18.5px;background:linear-gradient(#F0ECDE,#ECE7D7)"></div><div style="left:197px;top:121px;width:1px;height:19px;background:#D6D2C0"></div><div style="left:266.5px;top:122px;width:1px;height:17px;background:#D6D2C0"></div><svg style="position:absolute;left:189px;top:126px" width="8" height="10" viewBox="0 0 8 10"><path d="M1 1 L1 9 M7 1 L7 9" stroke="#666" stroke-width="1.2"/><path d="M3 2 L6 2 M3 4.5 L6 4.5 M3 7 L6 7" stroke="#444" stroke-width="1.3"/></svg><div class="t" style="left:219.7px;top:125px;font-size:11px">Done</div><div class="t" style="left:607px;top:125px;font-size:11px">Name</div><div style="left:976px;top:126px;width:13px;height:12px;background:linear-gradient(#D6E2FB,#B8CCF4);border-radius:2px;border:1px solid #CFDBF7"></div><svg style="position:absolute;left:978px;top:128px" width="9" height="7" viewBox="0 0 9 7"><path d="M1 1 L4.5 5 L8 1" fill="none" stroke="#3A4E78" stroke-width="1.8"/></svg><div style="left:185px;top:140px;width:808px;height:835px;overflow:hidden"><div style="left:0px;top:0px;width:13px;height:22px;background:#ECE9D8;border-right:1px solid #C9C5B6;border-top:1px solid #C9C5B6;box-shadow:inset 1.3px 1.3px 0 #FAF9F4"></div><div style="left:13px;top:0px;width:15px;height:22px;background:#ECE9D8;border-right:1px solid #C9C5B6"></div><div style="left:28px;top:0px;width:54.5px;height:22px;background:#fff;border-right:1px solid #C9C5B6;border-top:1px solid #C9C5B6"></div><div style="left:47.8px;top:5px;width:13px;height:13px;border:1.4px solid #3A5678;background:linear-gradient(135deg,#DCDCD6,#F2F2EE 70%,#fff);border-radius:1.5px"></div><div style="left:82.5px;top:0px;width:725.5px;height:22px;background:#fff;border-top:1px solid #C9C5B6"></div><div class="t" style="left:84.5px;top:3.3px;font-size:11px">Pick up rentals for wedding and reception.</div><div style="left:0px;top:22px;width:13px;height:22px;background:#ECE9D8;border-right:1px solid #C9C5B6;border-top:1px solid #C9C5B6;box-shadow:inset 1.3px 1.3px 0 #FAF9F4"></div><div style="left:13px;top:22px;width:15px;height:22px;background:#ECE9D8;border-right:1px solid #C9C5B6"></div><div style="left:28px;top:22px;width:54.5px;height:22px;background:#fff;border-right:1px solid #C9C5B6;border-top:1px solid #C9C5B6"></div><div style="left:47.8px;top:27px;width:13px;height:13px;border:1.4px solid #3A5678;background:linear-gradient(135deg,#DCDCD6,#F2F2EE 70%,#fff);border-radius:1.5px"></div><div style="left:82.5px;top:22px;width:725.5px;height:22px;background:#fff;border-top:1px solid #C9C5B6"></div><div class="t" style="left:84.5px;top:25.3px;font-size:11px">Get a good night’s sleep the night before your wedding day.</div><div style="left:0px;top:44px;width:13px;height:22px;background:#ECE9D8;border-right:1px solid #C9C5B6;border-top:1px solid #C9C5B6;box-shadow:inset 1.3px 1.3px 0 #FAF9F4"></div><div style="left:13px;top:44px;width:15px;height:22px;background:#ECE9D8;border-right:1px solid #C9C5B6"></div><div style="left:28px;top:44px;width:54.5px;height:22px;background:#fff;border-right:1px solid #C9C5B6;border-top:1px solid #C9C5B6"></div><div style="left:47.8px;top:49px;width:13px;height:13px;border:1.4px solid #3A5678;background:linear-gradient(135deg,#DCDCD6,#F2F2EE 70%,#fff);border-radius:1.5px"></div><div style="left:82.5px;top:44px;width:725.5px;height:22px;background:#fff;border-top:1px solid #C9C5B6"></div><div class="t" style="left:84.5px;top:47.3px;font-size:11px">Get a manicure.</div><div style="left:0px;top:66px;width:13px;height:22px;background:#ECE9D8;border-right:1px solid #C9C5B6;border-top:1px solid #C9C5B6;box-shadow:inset 1.3px 1.3px 0 #FAF9F4"></div><div style="left:13px;top:66px;width:15px;height:22px;background:#ECE9D8;border-right:1px solid #C9C5B6"></div><div style="left:28px;top:66px;width:54.5px;height:22px;background:#fff;border-right:1px solid #C9C5B6;border-top:1px solid #C9C5B6"></div><div style="left:47.8px;top:71px;width:13px;height:13px;border:1.4px solid #3A5678;background:linear-gradient(135deg,#DCDCD6,#F2F2EE 70%,#fff);border-radius:1.5px"></div><div style="left:82.5px;top:66px;width:725.5px;height:22px;background:#fff;border-top:1px solid #C9C5B6"></div><div class="t" style="left:84.5px;top:69.3px;font-size:11px">Choose a responsible person to return rentals after the wedding and pick up the deposit for each rental.</div><div style="left:0px;top:88px;width:13px;height:18px;background:#ECE9D8;border-right:1px solid #C9C5B6;border-top:1px solid #C9C5B6;box-shadow:inset 1.3px 1.3px 0 #FAF9F4"></div><div style="left:13px;top:88px;width:795px;height:18px;background:#EBE8DA;border-top:1px solid #C9C5B6"></div><div class="t" style="left:14px;top:91px;font-size:11px">Category : On the Wedding Day</div><div style="left:0px;top:106px;width:13px;height:22px;background:#ECE9D8;border-right:1px solid #C9C5B6;border-top:1px solid #C9C5B6;box-shadow:inset 1.3px 1.3px 0 #FAF9F4"></div><div style="left:13px;top:106px;width:15px;height:22px;background:#ECE9D8;border-right:1px solid #C9C5B6"></div><div style="left:28px;top:106px;width:54.5px;height:22px;background:#fff;border-right:1px solid #C9C5B6;border-top:1px solid #C9C5B6"></div><div style="left:47.8px;top:111px;width:13px;height:13px;border:1.4px solid #3A5678;background:linear-gradient(135deg,#DCDCD6,#F2F2EE 70%,#fff);border-radius:1.5px"></div><div style="left:82.5px;top:106px;width:725.5px;height:22px;background:#fff;border-top:1px solid #C9C5B6"></div><div class="t" style="left:84.5px;top:109.3px;font-size:11px">Remain calm and try to relax; perhaps with a long bath</div><div style="left:0px;top:128px;width:13px;height:22px;background:#ECE9D8;border-right:1px solid #C9C5B6;border-top:1px solid #C9C5B6;box-shadow:inset 1.3px 1.3px 0 #FAF9F4"></div><div style="left:13px;top:128px;width:15px;height:22px;background:#ECE9D8;border-right:1px solid #C9C5B6"></div><div style="left:28px;top:128px;width:54.5px;height:22px;background:#fff;border-right:1px solid #C9C5B6;border-top:1px solid #C9C5B6"></div><div style="left:47.8px;top:133px;width:13px;height:13px;border:1.4px solid #3A5678;background:linear-gradient(135deg,#DCDCD6,#F2F2EE 70%,#fff);border-radius:1.5px"></div><div style="left:82.5px;top:128px;width:725.5px;height:22px;background:#fff;border-top:1px solid #C9C5B6"></div><div class="t" style="left:84.5px;top:131.3px;font-size:11px">Remember to bring the wedding rings and marriage license.</div><div style="left:0px;top:150px;width:13px;height:22px;background:#ECE9D8;border-right:1px solid #C9C5B6;border-top:1px solid #C9C5B6;box-shadow:inset 1.3px 1.3px 0 #FAF9F4"></div><div style="left:13px;top:150px;width:15px;height:22px;background:#ECE9D8;border-right:1px solid #C9C5B6"></div><div style="left:28px;top:150px;width:54.5px;height:22px;background:#fff;border-right:1px solid #C9C5B6;border-top:1px solid #C9C5B6"></div><div style="left:47.8px;top:155px;width:13px;height:13px;border:1.4px solid #3A5678;background:linear-gradient(135deg,#DCDCD6,#F2F2EE 70%,#fff);border-radius:1.5px"></div><div style="left:82.5px;top:150px;width:725.5px;height:22px;background:#fff;border-top:1px solid #C9C5B6"></div><div class="t" style="left:84.5px;top:153.3px;font-size:11px">Check with florist to be sure that flowers will be delivered on time.</div><div style="left:0px;top:172px;width:13px;height:22px;background:#ECE9D8;border-right:1px solid #C9C5B6;border-top:1px solid #C9C5B6;box-shadow:inset 1.3px 1.3px 0 #FAF9F4"></div><div style="left:13px;top:172px;width:15px;height:22px;background:#ECE9D8;border-right:1px solid #C9C5B6"></div><div style="left:28px;top:172px;width:54.5px;height:22px;background:#fff;border-right:1px solid #C9C5B6;border-top:1px solid #C9C5B6"></div><div style="left:47.8px;top:177px;width:13px;height:13px;border:1.4px solid #3A5678;background:linear-gradient(135deg,#DCDCD6,#F2F2EE 70%,#fff);border-radius:1.5px"></div><div style="left:82.5px;top:172px;width:725.5px;height:22px;background:#fff;border-top:1px solid #C9C5B6"></div><div class="t" style="left:84.5px;top:175.3px;font-size:11px">Apply makeup and style your hair, or have it done professionally.</div><div style="left:0px;top:194px;width:13px;height:22px;background:#ECE9D8;border-right:1px solid #C9C5B6;border-top:1px solid #C9C5B6;box-shadow:inset 1.3px 1.3px 0 #FAF9F4"></div><div style="left:13px;top:194px;width:15px;height:22px;background:#ECE9D8;border-right:1px solid #C9C5B6"></div><div style="left:28px;top:194px;width:54.5px;height:22px;background:#fff;border-right:1px solid #C9C5B6;border-top:1px solid #C9C5B6"></div><div style="left:47.8px;top:199px;width:13px;height:13px;border:1.4px solid #3A5678;background:linear-gradient(135deg,#DCDCD6,#F2F2EE 70%,#fff);border-radius:1.5px"></div><div style="left:82.5px;top:194px;width:725.5px;height:22px;background:#fff;border-top:1px solid #C9C5B6"></div><div class="t" style="left:84.5px;top:197.3px;font-size:11px">Start dressing two hours before the ceremony.</div><div style="left:0px;top:216px;width:13px;height:22px;background:#ECE9D8;border-right:1px solid #C9C5B6;border-top:1px solid #C9C5B6;box-shadow:inset 1.3px 1.3px 0 #FAF9F4"></div><div style="left:13px;top:216px;width:15px;height:22px;background:#ECE9D8;border-right:1px solid #C9C5B6"></div><div style="left:28px;top:216px;width:54.5px;height:22px;background:#fff;border-right:1px solid #C9C5B6;border-top:1px solid #C9C5B6"></div><div style="left:47.8px;top:221px;width:13px;height:13px;border:1.4px solid #3A5678;background:linear-gradient(135deg,#DCDCD6,#F2F2EE 70%,#fff);border-radius:1.5px"></div><div style="left:82.5px;top:216px;width:725.5px;height:22px;background:#fff;border-top:1px solid #C9C5B6"></div><div class="t" style="left:84.5px;top:219.3px;font-size:11px">If pictures are to be taken before the ceremony, the wedding party should be ready about two hours before the ceremony.</div><div style="left:0px;top:238px;width:13px;height:22px;background:#ECE9D8;border-right:1px solid #C9C5B6;border-top:1px solid #C9C5B6;box-shadow:inset 1.3px 1.3px 0 #FAF9F4"></div><div style="left:13px;top:238px;width:15px;height:22px;background:#ECE9D8;border-right:1px solid #C9C5B6"></div><div style="left:28px;top:238px;width:54.5px;height:22px;background:#fff;border-right:1px solid #C9C5B6;border-top:1px solid #C9C5B6"></div><div style="left:47.8px;top:243px;width:13px;height:13px;border:1.4px solid #3A5678;background:linear-gradient(135deg,#DCDCD6,#F2F2EE 70%,#fff);border-radius:1.5px"></div><div style="left:82.5px;top:238px;width:725.5px;height:22px;background:#fff;border-top:1px solid #C9C5B6"></div><div class="t" style="left:84.5px;top:241.3px;font-size:11px">Mail or have someone mail the wedding announcements.</div><div style="left:0px;top:260px;width:13px;height:22px;background:#ECE9D8;border-right:1px solid #C9C5B6;border-top:1px solid #C9C5B6;box-shadow:inset 1.3px 1.3px 0 #FAF9F4"></div><div style="left:13px;top:260px;width:15px;height:22px;background:#ECE9D8;border-right:1px solid #C9C5B6"></div><div style="left:28px;top:260px;width:54.5px;height:22px;background:#fff;border-right:1px solid #C9C5B6;border-top:1px solid #C9C5B6"></div><div style="left:47.8px;top:265px;width:13px;height:13px;border:1.4px solid #3A5678;background:linear-gradient(135deg,#DCDCD6,#F2F2EE 70%,#fff);border-radius:1.5px"></div><div style="left:82.5px;top:260px;width:725.5px;height:22px;background:#fff;border-top:1px solid #C9C5B6"></div><div class="t" style="left:84.5px;top:263.3px;font-size:11px">Have music start about twenty minutes before the ceremony begins.</div><div style="left:0px;top:282px;width:13px;height:22px;background:#ECE9D8;border-right:1px solid #C9C5B6;border-top:1px solid #C9C5B6;box-shadow:inset 1.3px 1.3px 0 #FAF9F4"></div><div style="left:13px;top:282px;width:15px;height:22px;background:#ECE9D8;border-right:1px solid #C9C5B6"></div><div style="left:28px;top:282px;width:54.5px;height:22px;background:#fff;border-right:1px solid #C9C5B6;border-top:1px solid #C9C5B6"></div><div style="left:47.8px;top:287px;width:13px;height:13px;border:1.4px solid #3A5678;background:linear-gradient(135deg,#DCDCD6,#F2F2EE 70%,#fff);border-radius:1.5px"></div><div style="left:82.5px;top:282px;width:725.5px;height:22px;background:#fff;border-top:1px solid #C9C5B6"></div><div class="t" style="left:84.5px;top:285.3px;font-size:11px">Have guest seated as they arrive.</div><div style="left:0px;top:304px;width:13px;height:22px;background:#ECE9D8;border-right:1px solid #C9C5B6;border-top:1px solid #C9C5B6;box-shadow:inset 1.3px 1.3px 0 #FAF9F4"></div><div style="left:13px;top:304px;width:15px;height:22px;background:#ECE9D8;border-right:1px solid #C9C5B6"></div><div style="left:28px;top:304px;width:54.5px;height:22px;background:#fff;border-right:1px solid #C9C5B6;border-top:1px solid #C9C5B6"></div><div style="left:47.8px;top:309px;width:13px;height:13px;border:1.4px solid #3A5678;background:linear-gradient(135deg,#DCDCD6,#F2F2EE 70%,#fff);border-radius:1.5px"></div><div style="left:82.5px;top:304px;width:725.5px;height:22px;background:#fff;border-top:1px solid #C9C5B6"></div><div class="t" style="left:84.5px;top:307.3px;font-size:11px">Enjoy your wedding and SMILE.</div><div style="left:0px;top:326px;width:13px;height:18px;background:#ECE9D8;border-right:1px solid #C9C5B6;border-top:1px solid #C9C5B6;box-shadow:inset 1.3px 1.3px 0 #FAF9F4"></div><div style="left:13px;top:326px;width:795px;height:18px;background:#EBE8DA;border-top:1px solid #C9C5B6"></div><div class="t" style="left:14px;top:329px;font-size:11px">Category : Four to Six Weeks Before the Wedding</div><div style="left:0px;top:344px;width:13px;height:22px;background:#ECE9D8;border-right:1px solid #C9C5B6;border-top:1px solid #C9C5B6;box-shadow:inset 1.3px 1.3px 0 #FAF9F4"></div><div style="left:13px;top:344px;width:15px;height:22px;background:#ECE9D8;border-right:1px solid #C9C5B6"></div><div style="left:28px;top:344px;width:54.5px;height:22px;background:#fff;border-right:1px solid #C9C5B6;border-top:1px solid #C9C5B6"></div><div style="left:47.8px;top:349px;width:13px;height:13px;border:1.4px solid #3A5678;background:linear-gradient(135deg,#DCDCD6,#F2F2EE 70%,#fff);border-radius:1.5px"></div><div style="left:82.5px;top:344px;width:725.5px;height:22px;background:#fff;border-top:1px solid #C9C5B6"></div><div class="t" style="left:84.5px;top:347.3px;font-size:11px">Invitations should have been mailed out by now.</div><div style="left:0px;top:366px;width:13px;height:22px;background:#ECE9D8;border-right:1px solid #C9C5B6;border-top:1px solid #C9C5B6;box-shadow:inset 1.3px 1.3px 0 #FAF9F4"></div><div style="left:13px;top:366px;width:15px;height:22px;background:#ECE9D8;border-right:1px solid #C9C5B6"></div><div style="left:28px;top:366px;width:54.5px;height:22px;background:#fff;border-right:1px solid #C9C5B6;border-top:1px solid #C9C5B6"></div><div style="left:47.8px;top:371px;width:13px;height:13px;border:1.4px solid #3A5678;background:linear-gradient(135deg,#DCDCD6,#F2F2EE 70%,#fff);border-radius:1.5px"></div><div style="left:82.5px;top:366px;width:725.5px;height:22px;background:#fff;border-top:1px solid #C9C5B6"></div><div class="t" style="left:84.5px;top:369.3px;font-size:11px">Mail thank-you notes for shower gifts.</div><div style="left:0px;top:388px;width:13px;height:22px;background:#ECE9D8;border-right:1px solid #C9C5B6;border-top:1px solid #C9C5B6;box-shadow:inset 1.3px 1.3px 0 #FAF9F4"></div><div style="left:13px;top:388px;width:15px;height:22px;background:#ECE9D8;border-right:1px solid #C9C5B6"></div><div style="left:28px;top:388px;width:54.5px;height:22px;background:#fff;border-right:1px solid #C9C5B6;border-top:1px solid #C9C5B6"></div><div style="left:47.8px;top:393px;width:13px;height:13px;border:1.4px solid #3A5678;background:linear-gradient(135deg,#DCDCD6,#F2F2EE 70%,#fff);border-radius:1.5px"></div><div style="left:82.5px;top:388px;width:725.5px;height:22px;background:#fff;border-top:1px solid #C9C5B6"></div><div class="t" style="left:84.5px;top:391.3px;font-size:11px">Get your blood test and apply for marriage license.</div><div style="left:0px;top:410px;width:13px;height:22px;background:#ECE9D8;border-right:1px solid #C9C5B6;border-top:1px solid #C9C5B6;box-shadow:inset 1.3px 1.3px 0 #FAF9F4"></div><div style="left:13px;top:410px;width:15px;height:22px;background:#ECE9D8;border-right:1px solid #C9C5B6"></div><div style="left:28px;top:410px;width:54.5px;height:22px;background:#fff;border-right:1px solid #C9C5B6;border-top:1px solid #C9C5B6"></div><div style="left:47.8px;top:415px;width:13px;height:13px;border:1.4px solid #3A5678;background:linear-gradient(135deg,#DCDCD6,#F2F2EE 70%,#fff);border-radius:1.5px"></div><div style="left:82.5px;top:410px;width:725.5px;height:22px;background:#fff;border-top:1px solid #C9C5B6"></div><div class="t" style="left:84.5px;top:413.3px;font-size:11px">Have your final wedding dress fitting.</div><div style="left:0px;top:432px;width:13px;height:22px;background:#ECE9D8;border-right:1px solid #C9C5B6;border-top:1px solid #C9C5B6;box-shadow:inset 1.3px 1.3px 0 #FAF9F4"></div><div style="left:13px;top:432px;width:15px;height:22px;background:#ECE9D8;border-right:1px solid #C9C5B6"></div><div style="left:28px;top:432px;width:54.5px;height:22px;background:#fff;border-right:1px solid #C9C5B6;border-top:1px solid #C9C5B6"></div><div style="left:47.8px;top:437px;width:13px;height:13px;border:1.4px solid #3A5678;background:linear-gradient(135deg,#DCDCD6,#F2F2EE 70%,#fff);border-radius:1.5px"></div><div style="left:82.5px;top:432px;width:725.5px;height:22px;background:#fff;border-top:1px solid #C9C5B6"></div><div class="t" style="left:84.5px;top:435.3px;font-size:11px">Have the final fittings for your wedding attendants.</div><div style="left:0px;top:454px;width:13px;height:22px;background:#ECE9D8;border-right:1px solid #C9C5B6;border-top:1px solid #C9C5B6;box-shadow:inset 1.3px 1.3px 0 #FAF9F4"></div><div style="left:13px;top:454px;width:15px;height:22px;background:#ECE9D8;border-right:1px solid #C9C5B6"></div><div style="left:28px;top:454px;width:54.5px;height:22px;background:#fff;border-right:1px solid #C9C5B6;border-top:1px solid #C9C5B6"></div><div style="left:47.8px;top:459px;width:13px;height:13px;border:1.4px solid #3A5678;background:linear-gradient(135deg,#DCDCD6,#F2F2EE 70%,#fff);border-radius:1.5px"></div><div style="left:82.5px;top:454px;width:725.5px;height:22px;background:#fff;border-top:1px solid #C9C5B6"></div><div class="t" style="left:84.5px;top:457.3px;font-size:11px">Purchase a gift for your future spouse.</div><div style="left:0px;top:476px;width:13px;height:22px;background:#ECE9D8;border-right:1px solid #C9C5B6;border-top:1px solid #C9C5B6;box-shadow:inset 1.3px 1.3px 0 #FAF9F4"></div><div style="left:13px;top:476px;width:15px;height:22px;background:#ECE9D8;border-right:1px solid #C9C5B6"></div><div style="left:28px;top:476px;width:54.5px;height:22px;background:#fff;border-right:1px solid #C9C5B6;border-top:1px solid #C9C5B6"></div><div style="left:47.8px;top:481px;width:13px;height:13px;border:1.4px solid #3A5678;background:linear-gradient(135deg,#DCDCD6,#F2F2EE 70%,#fff);border-radius:1.5px"></div><div style="left:82.5px;top:476px;width:725.5px;height:22px;background:#fff;border-top:1px solid #C9C5B6"></div><div class="t" style="left:84.5px;top:479.3px;font-size:11px">Have attendants’ parties.</div><div style="left:0px;top:498px;width:13px;height:22px;background:#ECE9D8;border-right:1px solid #C9C5B6;border-top:1px solid #C9C5B6;box-shadow:inset 1.3px 1.3px 0 #FAF9F4"></div><div style="left:13px;top:498px;width:15px;height:22px;background:#ECE9D8;border-right:1px solid #C9C5B6"></div><div style="left:28px;top:498px;width:54.5px;height:22px;background:#fff;border-right:1px solid #C9C5B6;border-top:1px solid #C9C5B6"></div><div style="left:47.8px;top:503px;width:13px;height:13px;border:1.4px solid #3A5678;background:linear-gradient(135deg,#DCDCD6,#F2F2EE 70%,#fff);border-radius:1.5px"></div><div style="left:82.5px;top:498px;width:725.5px;height:22px;background:#fff;border-top:1px solid #C9C5B6"></div><div class="t" style="left:84.5px;top:501.3px;font-size:11px">Finalize decor, food and beverage menu with the caterer.</div><div style="left:0px;top:520px;width:13px;height:22px;background:#ECE9D8;border-right:1px solid #C9C5B6;border-top:1px solid #C9C5B6;box-shadow:inset 1.3px 1.3px 0 #FAF9F4"></div><div style="left:13px;top:520px;width:15px;height:22px;background:#ECE9D8;border-right:1px solid #C9C5B6"></div><div style="left:28px;top:520px;width:54.5px;height:22px;background:#fff;border-right:1px solid #C9C5B6;border-top:1px solid #C9C5B6"></div><div style="left:47.8px;top:525px;width:13px;height:13px;border:1.4px solid #3A5678;background:linear-gradient(135deg,#DCDCD6,#F2F2EE 70%,#fff);border-radius:1.5px"></div><div style="left:82.5px;top:520px;width:725.5px;height:22px;background:#fff;border-top:1px solid #C9C5B6"></div><div class="t" style="left:84.5px;top:523.3px;font-size:11px">Purchase going away outfit.</div><div style="left:0px;top:542px;width:13px;height:18px;background:#ECE9D8;border-right:1px solid #C9C5B6;border-top:1px solid #C9C5B6;box-shadow:inset 1.3px 1.3px 0 #FAF9F4"></div><div style="left:13px;top:542px;width:795px;height:18px;background:#EBE8DA;border-top:1px solid #C9C5B6"></div><div class="t" style="left:14px;top:545px;font-size:11px">Category : Two to Three Months Before the Wedding</div><div style="left:0px;top:560px;width:13px;height:22px;background:#ECE9D8;border-right:1px solid #C9C5B6;border-top:1px solid #C9C5B6;box-shadow:inset 1.3px 1.3px 0 #FAF9F4"></div><div style="left:13px;top:560px;width:15px;height:22px;background:#ECE9D8;border-right:1px solid #C9C5B6"></div><div style="left:28px;top:560px;width:54.5px;height:22px;background:#fff;border-right:1px solid #C9C5B6;border-top:1px solid #C9C5B6"></div><div style="left:47.8px;top:565px;width:13px;height:13px;border:1.4px solid #3A5678;background:linear-gradient(135deg,#DCDCD6,#F2F2EE 70%,#fff);border-radius:1.5px"></div><div style="left:82.5px;top:560px;width:725.5px;height:22px;background:#fff;border-top:1px solid #C9C5B6"></div><div class="t" style="left:84.5px;top:563.3px;font-size:11px">Send wedding announcements to the newspaper.</div><div style="left:0px;top:582px;width:13px;height:22px;background:#ECE9D8;border-right:1px solid #C9C5B6;border-top:1px solid #C9C5B6;box-shadow:inset 1.3px 1.3px 0 #FAF9F4"></div><div style="left:13px;top:582px;width:15px;height:22px;background:#ECE9D8;border-right:1px solid #C9C5B6"></div><div style="left:28px;top:582px;width:54.5px;height:22px;background:#fff;border-right:1px solid #C9C5B6;border-top:1px solid #C9C5B6"></div><div style="left:47.8px;top:587px;width:13px;height:13px;border:1.4px solid #3A5678;background:linear-gradient(135deg,#DCDCD6,#F2F2EE 70%,#fff);border-radius:1.5px"></div><div style="left:82.5px;top:582px;width:725.5px;height:22px;background:#fff;border-top:1px solid #C9C5B6"></div><div class="t" style="left:84.5px;top:585.3px;font-size:11px">Reserve accommodations for out-of-town attendants and guests.</div><div style="left:0px;top:604px;width:13px;height:22px;background:#ECE9D8;border-right:1px solid #C9C5B6;border-top:1px solid #C9C5B6;box-shadow:inset 1.3px 1.3px 0 #FAF9F4"></div><div style="left:13px;top:604px;width:15px;height:22px;background:#ECE9D8;border-right:1px solid #C9C5B6"></div><div style="left:28px;top:604px;width:54.5px;height:22px;background:#fff;border-right:1px solid #C9C5B6;border-top:1px solid #C9C5B6"></div><div style="left:47.8px;top:609px;width:13px;height:13px;border:1.4px solid #3A5678;background:linear-gradient(135deg,#DCDCD6,#F2F2EE 70%,#fff);border-radius:1.5px"></div><div style="left:82.5px;top:604px;width:725.5px;height:22px;background:#fff;border-top:1px solid #C9C5B6"></div><div class="t" style="left:84.5px;top:607.3px;font-size:11px">Choose the men’s wedding attire. Be sure the sizes are correct.</div><div style="left:0px;top:626px;width:13px;height:22px;background:#ECE9D8;border-right:1px solid #C9C5B6;border-top:1px solid #C9C5B6;box-shadow:inset 1.3px 1.3px 0 #FAF9F4"></div><div style="left:13px;top:626px;width:15px;height:22px;background:#ECE9D8;border-right:1px solid #C9C5B6"></div><div style="left:28px;top:626px;width:54.5px;height:22px;background:#fff;border-right:1px solid #C9C5B6;border-top:1px solid #C9C5B6"></div><div style="left:47.8px;top:631px;width:13px;height:13px;border:1.4px solid #3A5678;background:linear-gradient(135deg,#DCDCD6,#F2F2EE 70%,#fff);border-radius:1.5px"></div><div style="left:82.5px;top:626px;width:725.5px;height:22px;background:#fff;border-top:1px solid #C9C5B6"></div><div class="t" style="left:84.5px;top:629.3px;font-size:11px">You or your calligrapher should start addressing invitation envelopes.</div><div style="left:0px;top:648px;width:13px;height:22px;background:#ECE9D8;border-right:1px solid #C9C5B6;border-top:1px solid #C9C5B6;box-shadow:inset 1.3px 1.3px 0 #FAF9F4"></div><div style="left:13px;top:648px;width:15px;height:22px;background:#ECE9D8;border-right:1px solid #C9C5B6"></div><div style="left:28px;top:648px;width:54.5px;height:22px;background:#fff;border-right:1px solid #C9C5B6;border-top:1px solid #C9C5B6"></div><div style="left:47.8px;top:653px;width:13px;height:13px;border:1.4px solid #3A5678;background:linear-gradient(135deg,#DCDCD6,#F2F2EE 70%,#fff);border-radius:1.5px"></div><div style="left:82.5px;top:648px;width:725.5px;height:22px;background:#fff;border-top:1px solid #C9C5B6"></div><div class="t" style="left:84.5px;top:651.3px;font-size:11px">Mail invitations six weeks before the wedding.</div><div style="left:0px;top:670px;width:13px;height:22px;background:#ECE9D8;border-right:1px solid #C9C5B6;border-top:1px solid #C9C5B6;box-shadow:inset 1.3px 1.3px 0 #FAF9F4"></div><div style="left:13px;top:670px;width:15px;height:22px;background:#ECE9D8;border-right:1px solid #C9C5B6"></div><div style="left:28px;top:670px;width:54.5px;height:22px;background:#fff;border-right:1px solid #C9C5B6;border-top:1px solid #C9C5B6"></div><div style="left:47.8px;top:675px;width:13px;height:13px;border:1.4px solid #3A5678;background:linear-gradient(135deg,#DCDCD6,#F2F2EE 70%,#fff);border-radius:1.5px"></div><div style="left:82.5px;top:670px;width:725.5px;height:22px;background:#fff;border-top:1px solid #C9C5B6"></div><div class="t" style="left:84.5px;top:673.3px;font-size:11px">Assist the groom’s mother with making reservations and finalizing rehearsal dinner details.</div><div style="left:0px;top:692px;width:13px;height:22px;background:#ECE9D8;border-right:1px solid #C9C5B6;border-top:1px solid #C9C5B6;box-shadow:inset 1.3px 1.3px 0 #FAF9F4"></div><div style="left:13px;top:692px;width:15px;height:22px;background:#ECE9D8;border-right:1px solid #C9C5B6"></div><div style="left:28px;top:692px;width:54.5px;height:22px;background:#fff;border-right:1px solid #C9C5B6;border-top:1px solid #C9C5B6"></div><div style="left:47.8px;top:697px;width:13px;height:13px;border:1.4px solid #3A5678;background:linear-gradient(135deg,#DCDCD6,#F2F2EE 70%,#fff);border-radius:1.5px"></div><div style="left:82.5px;top:692px;width:725.5px;height:22px;background:#fff;border-top:1px solid #C9C5B6"></div><div class="t" style="left:84.5px;top:695.3px;font-size:11px">Finalize details with florist, photographer, videographer, musicians and baker.</div><div style="left:0px;top:714px;width:13px;height:22px;background:#ECE9D8;border-right:1px solid #C9C5B6;border-top:1px solid #C9C5B6;box-shadow:inset 1.3px 1.3px 0 #FAF9F4"></div><div style="left:13px;top:714px;width:15px;height:22px;background:#ECE9D8;border-right:1px solid #C9C5B6"></div><div style="left:28px;top:714px;width:54.5px;height:22px;background:#fff;border-right:1px solid #C9C5B6;border-top:1px solid #C9C5B6"></div><div style="left:47.8px;top:719px;width:13px;height:13px;border:1.4px solid #3A5678;background:linear-gradient(135deg,#DCDCD6,#F2F2EE 70%,#fff);border-radius:1.5px"></div><div style="left:82.5px;top:714px;width:725.5px;height:22px;background:#fff;border-top:1px solid #C9C5B6"></div><div class="t" style="left:84.5px;top:717.3px;font-size:11px">Set the date and time for the rehearsal with the officiate.</div><div style="left:0px;top:736px;width:13px;height:22px;background:#ECE9D8;border-right:1px solid #C9C5B6;border-top:1px solid #C9C5B6;box-shadow:inset 1.3px 1.3px 0 #FAF9F4"></div><div style="left:13px;top:736px;width:15px;height:22px;background:#ECE9D8;border-right:1px solid #C9C5B6"></div><div style="left:28px;top:736px;width:54.5px;height:22px;background:#fff;border-right:1px solid #C9C5B6;border-top:1px solid #C9C5B6"></div><div style="left:47.8px;top:741px;width:13px;height:13px;border:1.4px solid #3A5678;background:linear-gradient(135deg,#DCDCD6,#F2F2EE 70%,#fff);border-radius:1.5px"></div><div style="left:82.5px;top:736px;width:725.5px;height:22px;background:#fff;border-top:1px solid #C9C5B6"></div><div class="t" style="left:84.5px;top:739.3px;font-size:11px">Schedule a formal bride portrait appointment.</div><div style="left:0px;top:758px;width:13px;height:22px;background:#ECE9D8;border-right:1px solid #C9C5B6;border-top:1px solid #C9C5B6;box-shadow:inset 1.3px 1.3px 0 #FAF9F4"></div><div style="left:13px;top:758px;width:15px;height:22px;background:#ECE9D8;border-right:1px solid #C9C5B6"></div><div style="left:28px;top:758px;width:54.5px;height:22px;background:#fff;border-right:1px solid #C9C5B6;border-top:1px solid #C9C5B6"></div><div style="left:47.8px;top:763px;width:13px;height:13px;border:1.4px solid #3A5678;background:linear-gradient(135deg,#DCDCD6,#F2F2EE 70%,#fff);border-radius:1.5px"></div><div style="left:82.5px;top:758px;width:725.5px;height:22px;background:#fff;border-top:1px solid #C9C5B6"></div><div class="t" style="left:84.5px;top:761.3px;font-size:11px">Choose a responsible person to attend to your guest book.</div><div style="left:0px;top:780px;width:13px;height:22px;background:#ECE9D8;border-right:1px solid #C9C5B6;border-top:1px solid #C9C5B6;box-shadow:inset 1.3px 1.3px 0 #FAF9F4"></div><div style="left:13px;top:780px;width:15px;height:22px;background:#ECE9D8;border-right:1px solid #C9C5B6"></div><div style="left:28px;top:780px;width:54.5px;height:22px;background:#fff;border-right:1px solid #C9C5B6;border-top:1px solid #C9C5B6"></div><div style="left:47.8px;top:785px;width:13px;height:13px;border:1.4px solid #3A5678;background:linear-gradient(135deg,#DCDCD6,#F2F2EE 70%,#fff);border-radius:1.5px"></div><div style="left:82.5px;top:780px;width:725.5px;height:22px;background:#fff;border-top:1px solid #C9C5B6"></div><div class="t" style="left:84.5px;top:783.3px;font-size:11px">Make an appointment with hairdresser and makeup artist, if you are to have it done for you.</div><div style="left:0px;top:802px;width:13px;height:18px;background:#ECE9D8;border-right:1px solid #C9C5B6;border-top:1px solid #C9C5B6;box-shadow:inset 1.3px 1.3px 0 #FAF9F4"></div><div style="left:13px;top:802px;width:795px;height:18px;background:#EBE8DA;border-top:1px solid #C9C5B6"></div><div class="t" style="left:14px;top:805px;font-size:11px">Category : One Year Or More Before Wedding</div><div style="left:0px;top:820px;width:13px;height:22px;background:#ECE9D8;border-right:1px solid #C9C5B6;border-top:1px solid #C9C5B6;box-shadow:inset 1.3px 1.3px 0 #FAF9F4"></div><div style="left:13px;top:820px;width:15px;height:22px;background:#ECE9D8;border-right:1px solid #C9C5B6"></div><div style="left:28px;top:820px;width:54.5px;height:22px;background:#fff;border-right:1px solid #C9C5B6;border-top:1px solid #C9C5B6"></div><div style="left:47.8px;top:825px;width:13px;height:13px;border:1.4px solid #3A5678;background:linear-gradient(135deg,#DCDCD6,#F2F2EE 70%,#fff);border-radius:1.5px"></div><div style="left:82.5px;top:820px;width:725.5px;height:22px;background:#fff;border-top:1px solid #C9C5B6"></div><div class="t" style="left:84.5px;top:823.3px;font-size:11px">Announce your engagement to family and friends</div></div><div style="left:992px;top:140px;width:1px;height:835px;background:#C9C5B6"></div><div style="left:993px;top:87px;width:16px;height:888px;background:#F7F6F0"></div><div style="left:994px;top:87px;width:14px;height:16px;background:linear-gradient(#D8E4FC,#BCCFF7);border-radius:2px;border:1px solid #E4ECFC"></div><svg style="position:absolute;left:997px;top:91px" width="9" height="7" viewBox="0 0 9 7"><path d="M1 6 L4.5 2 L8 6" fill="none" stroke="#4D6185" stroke-width="1.8"/></svg><div style="left:994px;top:959px;width:14px;height:14px;background:linear-gradient(#D8E4FC,#BCCFF7);border-radius:2px;border:1px solid #E4ECFC"></div><svg style="position:absolute;left:997px;top:963px" width="9" height="7" viewBox="0 0 9 7"><path d="M1 1 L4.5 5 L8 1" fill="none" stroke="#4D6185" stroke-width="1.8"/></svg><div style="left:994.5px;top:381px;width:14px;height:292px;background:linear-gradient(90deg,#C6D6FC,#C4D4FA 50%,#BACCF6);border-radius:2px;border:1px solid #DDE6FB"></div><div style="left:998px;top:524px;width:6px;height:6px;border:1px solid #A8BCE8"></div><div style="left:184px;top:976px;width:829px;height:26px;background:#F6F5EF"></div><div style="left:189px;top:977.5px;width:72.5px;height:24px;background:linear-gradient(#FBFBF8,#F1F0EA);border:1px solid #C8C6BE;border-bottom:none;border-radius:4px 4px 0 0"></div><div class="t" style="left:191.5px;top:981.5px;font-size:10.6px">Search result</div><div style="left:1013px;top:88px;width:236px;height:21px;background:linear-gradient(#FBFAF6,#EEEBE0);border:1px solid #DCD8C8;border-radius:3px"></div><div class="t" style="left:1017px;top:90px;font-size:10.8px">Categories Bar</div><svg style="position:absolute;left:1217px;top:93px" width="11" height="13" viewBox="0 0 11 13"><path d="M2 1 L9 1" stroke="#2A4690" stroke-width="1.6"/><rect x="2.8" y="1.5" width="5.4" height="5" fill="#C8D8F8" stroke="#2A4690" stroke-width="1.2"/><path d="M0.5 7.2 L10.5 7.2 L8.5 8.8 L2.5 8.8Z" fill="#2A4690"/><path d="M5.5 8.5 L5.5 12.5" stroke="#2A4690" stroke-width="1.6"/></svg><div style="left:1233px;top:93px;width:12.5px;height:12px;background:linear-gradient(#E2684A,#CC3E1C);border-radius:1.5px"></div><svg style="position:absolute;left:1235.5px;top:95.5px" width="8" height="7" viewBox="0 0 8 7"><path d="M1 1 L7 6 M7 1 L1 6" stroke="#fff" stroke-width="1.7"/></svg><div style="left:1012px;top:110px;width:239px;height:892px;background:#fff;border:1px solid #A6B3C4;border-right:2px solid #A9B6C6"></div><div style="left:1009px;top:86px;width:4px;height:890px;background:linear-gradient(90deg,#B8C4D0,#A4B0C0 50%,#B4C0CC)"></div><div style="left:1021px;top:120.7px;width:8px;height:1px;background:#C4C4C0"></div><div style="left:1021px;top:138.63px;width:8px;height:1px;background:#C4C4C0"></div><div style="left:1021px;top:156.56px;width:8px;height:1px;background:#C4C4C0"></div><div style="left:1021px;top:174.49px;width:8px;height:1px;background:#C4C4C0"></div><div style="left:1021px;top:192.42000000000002px;width:8px;height:1px;background:#C4C4C0"></div><div style="left:1021px;top:210.35000000000002px;width:8px;height:1px;background:#C4C4C0"></div><div style="left:1021px;top:228.28px;width:8px;height:1px;background:#C4C4C0"></div><div style="left:1021px;top:246.20999999999998px;width:8px;height:1px;background:#C4C4C0"></div><div style="left:1021px;top:264.14px;width:8px;height:1px;background:#C4C4C0"></div><div style="left:1021px;top:282.07px;width:8px;height:1px;background:#C4C4C0"></div><div style="left:1021px;top:300.0px;width:8px;height:1px;background:#C4C4C0"></div><div style="left:1021px;top:317.93px;width:8px;height:1px;background:#C4C4C0"></div><div style="left:1021px;top:112px;width:1px;height:206px;background:#C4C4C0"></div><svg style="position:absolute;left:1031px;top:113.2px" width="16" height="16" viewBox="0 0 16 16"><circle cx="5" cy="5" r="3" fill="#F0B040"/><path d="M1 14 Q1 8 5 8 Q9 8 9 14Z" fill="#3060D0"/><circle cx="11" cy="5" r="3" fill="#904010" stroke="#402000" stroke-width=".5"/><path d="M7 14 Q7 8 11 8 Q15 8 15 14Z" fill="#30A040"/></svg><div class="t" style="left:1051.5px;top:114.2px;font-size:10.8px;-webkit-text-stroke:0;color:#262626">One Year Or More Before Wedding</div><svg style="position:absolute;left:1031px;top:131.13px" width="16" height="16" viewBox="0 0 16 16"><path d="M1 4 Q5 1 8 5 Q11 1 15 4 L15 13 Q11 10 8 14 Q5 10 1 13Z" fill="#F4F8FC" stroke="#E09060" stroke-width="1"/><path d="M8 5 L8 14" stroke="#6090C0"/></svg><div class="t" style="left:1051.5px;top:132.13px;font-size:10.8px;-webkit-text-stroke:0;color:#262626">Nine To Twelve Months Before The Wec</div><svg style="position:absolute;left:1031px;top:149.06px" width="16" height="16" viewBox="0 0 16 16"><rect x="2.5" y="2" width="11" height="13" rx="1" fill="#9A3040" stroke="#601820" stroke-width=".7"/><rect x="6" y="3" width="7" height="11" fill="#F4F4F8" stroke="#8088A0" stroke-width=".5"/><path d="M7 0.5 L7 4 M11 0.5 L11 4" stroke="#505868" stroke-width="1.2"/><rect x="8" y="8" width="3" height="3" fill="#404860"/></svg><div class="t" style="left:1051.5px;top:150.06px;font-size:10.8px;-webkit-text-stroke:0;color:#262626">Six to Nine Months Before the Wedding</div><svg style="position:absolute;left:1031px;top:166.99px" width="16" height="16" viewBox="0 0 16 16"><path d="M1 9 Q1 3 8 3 Q15 3 15 8 Q15 11 12 11 Q10 11 10 13 Q9 15 6 14 Q1 13 1 9Z" fill="#E8A838" stroke="#A06818" stroke-width=".6"/><circle cx="4.5" cy="8" r="1.6" fill="#D83020"/><circle cx="8" cy="6" r="1.6" fill="#F0E020"/><circle cx="11.5" cy="7" r="1.6" fill="#50A030"/><circle cx="6" cy="11" r="1.4" fill="#3060C0"/></svg><div class="t" style="left:1051.5px;top:167.99px;font-size:10.8px;-webkit-text-stroke:0;color:#262626">Four to Six Months Before the Wedding</div><svg style="position:absolute;left:1031px;top:184.92000000000002px" width="16" height="16" viewBox="0 0 16 16"><path d="M2.5 1 L2.5 15.5" stroke="#202860" stroke-width="1.6"/><path d="M3 2 Q6 0.5 9 2.5 Q12 1 15 2 L15 10 Q12 9 9 10.5 Q6 8.5 3 10Z" fill="#8088E8" stroke="#2830A0" stroke-width=".7"/><path d="M9 2.5 L9 10.5" stroke="#4048B8" stroke-width=".6"/></svg><div class="t" style="left:1051.5px;top:185.92000000000002px;font-size:10.8px;-webkit-text-stroke:0;color:#262626">Two to Three Months Before the Weddin</div><svg style="position:absolute;left:1031px;top:202.85000000000002px" width="16" height="16" viewBox="0 0 16 16"><circle cx="11" cy="5" r="4.2" fill="#F4D858" stroke="#B89020" stroke-width=".8"/><circle cx="12" cy="4" r="1.2" fill="#fff"/><path d="M8.2 8 L2 14.5" stroke="#C8A020" stroke-width="2.6" stroke-linecap="round"/><path d="M8.2 8 L2 14.5" stroke="#F8E070" stroke-width="1.2"/><path d="M4 12.5 L6 14.5 M5.5 11 L7.5 13" stroke="#C8A020" stroke-width="1.4"/></svg><div class="t" style="left:1051.5px;top:203.85000000000002px;font-size:10.8px;-webkit-text-stroke:0;color:#262626">Four to Six Weeks Before the Wedding</div><svg style="position:absolute;left:1031px;top:220.78px" width="16" height="16" viewBox="0 0 16 16"><path d="M1.5 15 L6 9 L9 11 Z" fill="#2848B0"/><path d="M5 10 Q9 3 15 1 Q13 7 8 11Z" fill="#3C6CD8" stroke="#1C3890" stroke-width=".6"/><path d="M8 8 L13 3" stroke="#C8D8F8" stroke-width=".8"/></svg><div class="t" style="left:1051.5px;top:221.78px;font-size:10.8px;-webkit-text-stroke:0;color:#262626">Two to Three Weeks Before the Weddin</div><svg style="position:absolute;left:1031px;top:238.70999999999998px" width="16" height="16" viewBox="0 0 16 16"><path d="M3 5 Q3 1 8 1 Q13 1 13 5 L13 14 L10 14 L8 16 L6 14 L3 14Z" fill="#D82018" stroke="#901010" stroke-width=".6"/><path d="M4.5 8 Q8 10.5 11.5 8" fill="none" stroke="#FFD8D0" stroke-width="1.3"/></svg><div class="t" style="left:1051.5px;top:239.70999999999998px;font-size:10.8px;-webkit-text-stroke:0;color:#262626">One to Two Weeks Before the Wedding</div><svg style="position:absolute;left:1031px;top:256.64px" width="16" height="16" viewBox="0 0 16 16"><rect x="2" y="1" width="12" height="10" rx="2" fill="#70C0F0" stroke="#3878A8" stroke-width=".8"/><rect x="3.5" y="2.5" width="9" height="7" rx="1" fill="#A8DCF8"/><path d="M6 11 L10 11 L11 14 L5 14Z" fill="#8898A8" stroke="#506070" stroke-width=".5"/><ellipse cx="8" cy="14.5" rx="4" ry="1.3" fill="#708090"/></svg><div class="t" style="left:1051.5px;top:257.64px;font-size:10.8px;-webkit-text-stroke:0;color:#262626">One Week Before the Wedding</div><svg style="position:absolute;left:1031px;top:274.57px" width="16" height="16" viewBox="0 0 16 16"><rect x="1" y="2" width="14" height="12" fill="#E8F0E8" stroke="#308030" stroke-width="1"/><path d="M2 13 L6 8 L9 11 L14 7 L14 13Z" fill="#48A848"/><path d="M5 4 L14 14" stroke="#2858C0" stroke-width="2.4" stroke-linecap="round"/><path d="M5 4 L8 7" stroke="#E8B060" stroke-width="2.4"/></svg><div class="t" style="left:1051.5px;top:275.57px;font-size:10.8px;-webkit-text-stroke:0;color:#262626">One or Two Days Before the Wedding</div><svg style="position:absolute;left:1031px;top:292.5px" width="16" height="16" viewBox="0 0 16 16"><rect x="2" y="6" width="13" height="9" fill="#F0F4F8" stroke="#3878C0" stroke-width=".9"/><path d="M2 9 L15 9 M2 12 L15 12 M6 6 L6 15 M10 6 L10 15" stroke="#5890D0" stroke-width=".7"/><rect x="7" y="10" width="3" height="2" fill="#50A850"/><circle cx="5" cy="5" r="3.6" fill="#F8F0F0" stroke="#D84848" stroke-width="1"/><path d="M5 3 L5 5 L6.5 5.5" stroke="#404040" stroke-width=".6" fill="none"/></svg><div class="t" style="left:1051.5px;top:293.5px;font-size:10.8px;-webkit-text-stroke:0;color:#262626">On the Wedding Day</div><svg style="position:absolute;left:1031px;top:310.43px" width="16" height="16" viewBox="0 0 16 16"><circle cx="8" cy="8.5" r="7.3" fill="#FFE030" stroke="#C89000" stroke-width=".7"/><ellipse cx="5.5" cy="6" rx="1" ry="1.5" fill="#000"/><ellipse cx="10.5" cy="6" rx="1" ry="1.5" fill="#000"/><path d="M3.5 9 Q8 15.5 12.5 9Z" fill="#502000"/><path d="M5 11.5 Q8 13.5 11 11.5" fill="#E05050"/></svg><div class="t" style="left:1051.5px;top:311.43px;font-size:10.8px;-webkit-text-stroke:0;color:#262626">After the Wedding</div><div style="left:1029px;top:130px;width:220px;height:18px;border:1px solid #000"></div><div style="left:1251px;top:85px;width:29px;height:918px;background:#F5F4EF"></div><div style="left:1254px;top:89px;width:24px;height:60px;background:linear-gradient(90deg,#F8F7F2,#ECEAE2);border:1px solid #D4D1C6;border-radius:4px 2px 2px 4px"></div><div class="t" style="left:1258.5px;top:92px;font-size:10.2px;transform-origin:0 0;transform:translate(14px,0) rotate(90deg)">Filters Bar</div><div style="left:0px;top:1001px;width:1280px;height:3.5px;background:#ECECEA"></div><div style="left:0px;top:1004px;width:1280px;height:1.2px;background:#A8A498"></div><div style="left:0px;top:1005px;width:1280px;height:16px;background:linear-gradient(#F1EFE6,#E9E5D5)"></div><div style="left:0px;top:1020px;width:1280px;height:1.5px;background:#F4F6FA"></div><div style="left:0px;top:1021.5px;width:1280px;height:3px;background:linear-gradient(#5A8CE8,#2B62D8)"></div><div class="t" style="left:1013px;top:1000px;font-family:'Liberation Mono',monospace;font-weight:bold;font-size:20px;letter-spacing:1.2px;line-height:22px;color:#3A0A0A;-webkit-text-stroke:0.4px #3A0A0A">www.todolistsoft.com</div></div></body></html>
